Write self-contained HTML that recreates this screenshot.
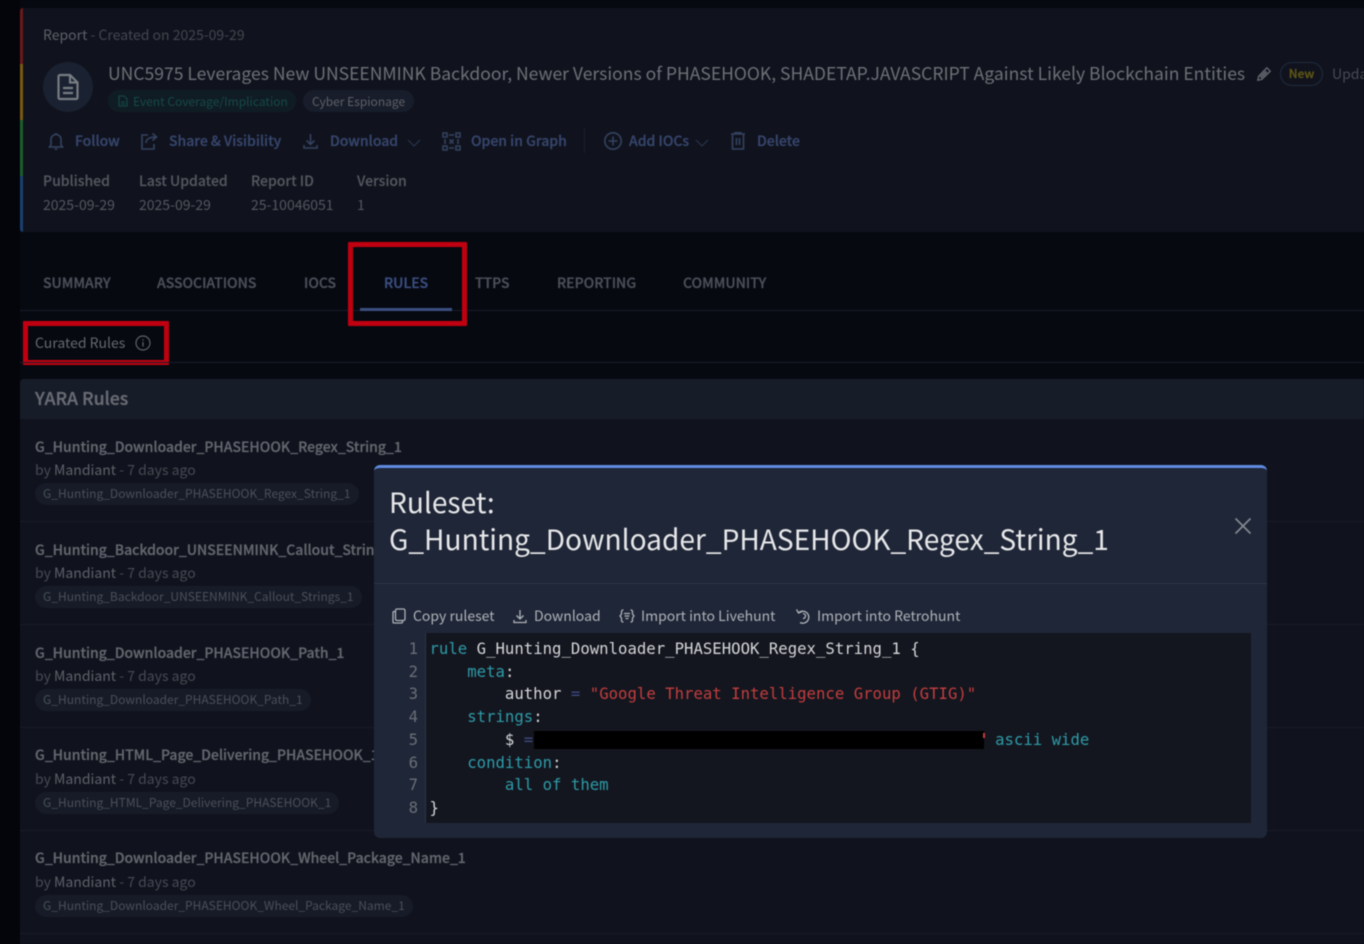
<!DOCTYPE html>
<html><head><meta charset="utf-8"><style>
html,body{margin:0;padding:0;width:1364px;height:944px;overflow:hidden;background:#05070f}
#w{position:absolute;left:0;top:0;width:1364px;height:944px;overflow:hidden;filter:blur(.5px);font-family:"Noto Sans CJK JP","Liberation Sans",sans-serif;background:#070911}
.t{position:absolute;white-space:nowrap;line-height:20px;height:20px}
.b{position:absolute}
svg{position:absolute;fill:none;overflow:visible}
.act{color:#36456c;font-size:14px;font-weight:500;-webkit-text-stroke:.3px #36456c}
.ic{stroke:#33425f;stroke-width:1.6}
.rt{color:#64676e;font-size:14px;font-weight:500;left:35px;-webkit-text-stroke:.25px #64676e}
.by{color:#474a52;font-size:14px;left:35px}
.by b{color:#5e6168;font-weight:400}
.tag{position:absolute;left:35px;height:22px;border-radius:11px;background:#171b28;color:#4a4f58;font-size:12px;line-height:22px;padding:0 8px;white-space:nowrap}
.div{position:absolute;left:20px;width:1344px;height:1px;background:#191c28}
.tab{color:#4b4f58;font-size:14px;font-weight:500;-webkit-text-stroke:.3px #4b4f58}
.lb{font-size:14px;color:#54575e;font-weight:500;-webkit-text-stroke:.15px #54575e}
.m{position:absolute;font-family:"DejaVu Sans Mono","Liberation Mono",monospace;font-size:15.66px;line-height:22.7px;white-space:pre;color:#d3d5d8}
.k{color:#2d9ba8}.s{color:#c23d3d}.o{color:#3d4a80}
.mb{color:#aeb2b8;font-size:14px}
.mi{stroke:#aeb2b8;stroke-width:1.3}
</style></head><body><div id="w">
<div class="b" style="left:0;top:0;width:20px;height:944px;background:#04050b"></div>
<!-- header card -->
<div class="b" style="left:20px;top:8px;width:1344px;height:224px;background:#10131d;border-radius:4px 0 0 4px"></div>
<div class="b" style="left:20px;top:8px;width:2.5px;height:56px;background:#6b1a1a;border-radius:3px 0 0 0"></div>
<div class="b" style="left:20px;top:64px;width:2.5px;height:56px;background:#7a5a12"></div>
<div class="b" style="left:20px;top:120px;width:2.5px;height:56px;background:#1c5e2a"></div>
<div class="b" style="left:20px;top:176px;width:2.5px;height:56px;background:#1a3f70;border-radius:0 0 0 3px"></div>
<div class="t" style="left:43px;top:24.5px;font-size:14px;color:#43464e"><span style="color:#5d6067">Report</span> - Created on 2025-09-29</div>
<div class="b" style="left:43px;top:62px;width:50px;height:50px;border-radius:50%;background:#1a2130"></div>
<svg style="left:56px;top:72px" width="24" height="30" viewBox="0 0 24 28"><path d="M2.500 3.500a1.500 1.500 0 0 1 1.500-1.500h10l7.500 7.500v15a1.500 1.500 0 0 1-1.500 1.500H4a1.500 1.500 0 0 1-1.500-1.500zM14 2v7.500h7.500M7 15h10M7 20h10" stroke="#777b82" stroke-width="2.200"/></svg>
<div class="t" style="left:108px;top:64px;font-size:17.55px;color:#6d7076">UNC5975 Leverages New UNSEENMINK Backdoor, Newer Versions of PHASEHOOK, SHADETAP.JAVASCRIPT Against Likely Blockchain Entities</div>
<svg style="left:1257px;top:67px" width="14" height="14" viewBox="0 0 14 14"><path d="M.8 13.200l.9-4L9.800.8l3.400 3.400-8.400 8.200z" stroke="#686b72" stroke-width="1.300"/><path d="M2.500 9.500l6-6 2 2-6 6z" fill="#5a5d64"/></svg>
<div class="b" style="left:1280px;top:62px;width:43px;height:24px;border:1.500px solid #1f2b40;border-radius:13px;box-sizing:border-box;color:#5f5615;font-size:12px;font-weight:500;text-align:center;line-height:22px;-webkit-text-stroke:.3px #5f5615">New</div>
<div class="t" style="left:1332px;top:64px;font-size:14px;color:#474a52">Update</div>
<div class="b" style="left:108px;top:90px;width:188px;height:22px;border-radius:11px;background:#101c24"></div>
<svg style="left:118px;top:95px" width="10" height="12" viewBox="0 0 10 12"><path d="M1 1h5l3 3v7H1zM3 7h4M3 9h4" stroke="#164a48" stroke-width="1.100"/></svg>
<div class="t" style="left:133px;top:91.5px;font-size:12px;color:#164a48">Event Coverage/Implication</div>
<div class="b" style="left:303px;top:90px;width:111px;height:22px;border-radius:11px;background:#181d2b"></div>
<div class="t" style="left:312px;top:91.5px;font-size:12px;color:#5d6067">Cyber Espionage</div>
<!-- actions -->
<svg class="ic" style="left:48px;top:132px" width="16" height="19" viewBox="0 0 16 19"><path d="M8 1v1.500M3 13V7.500a5 5 0 0 1 10 0V13l1.500 2h-13zM6.500 17h3"/></svg>
<div class="t act" style="left:75px;top:131px">Follow</div>
<svg class="ic" style="left:141px;top:132px" width="17" height="18" viewBox="0 0 17 18"><path d="M7 3H1v14h12v-5M5 11c0-4 3-6 10-6M11.500 1.500L15.500 5l-4 3.500"/></svg>
<div class="t act" style="left:169px;top:131px">Share &amp; Visibility</div>
<svg class="ic" style="left:303px;top:133px" width="15" height="17" viewBox="0 0 15 17"><path d="M7.500 1v10M3.500 7.500l4 4 4-4M1 12v3h13v-3"/></svg>
<div class="t act" style="left:330px;top:131px">Download</div>
<svg style="left:407px;top:139px" width="14" height="8" viewBox="0 0 14 8"><path d="M1 1l6 6 6-6" stroke="#2a3550" stroke-width="1.100"/></svg>
<svg class="ic" style="left:442px;top:132px" width="19" height="19" viewBox="0 0 19 19"><path d="M1 1h4v4H1zM14 1h4v4h-4zM1 14h4v4H1zM14 14h4v4h-4zM7 3h5M7 16h5M3 7v5M16 7v5M7.500 7.500l4 4M11.500 7.500l-4 4"/></svg>
<div class="t act" style="left:471px;top:131px">Open in Graph</div>
<div class="b" style="left:584px;top:128px;width:1px;height:25px;background:#1a1e2b"></div>
<svg class="ic" style="left:604px;top:132px" width="18" height="18" viewBox="0 0 18 18"><circle cx="9" cy="9" r="8.200"/><path d="M9 4.500v9M4.500 9h9"/></svg>
<div class="t act" style="left:629px;top:131px">Add IOCs</div>
<svg style="left:695px;top:139px" width="14" height="8" viewBox="0 0 14 8"><path d="M1 1l6 6 6-6" stroke="#2a3550" stroke-width="1.100"/></svg>
<svg class="ic" style="left:731px;top:132px" width="14" height="18" viewBox="0 0 14 18"><path d="M0 2h14M4 2V.8h6V2M1.500 2v15h11V2M5.500 6v7M8.500 6v7"/></svg>
<div class="t act" style="left:757px;top:131px">Delete</div>
<!-- meta -->
<div class="t lb" style="left:43px;top:171px">Published</div>
<div class="t lb" style="left:139px;top:171px">Last Updated</div>
<div class="t lb" style="left:251px;top:171px">Report ID</div>
<div class="t lb" style="left:357px;top:171px">Version</div>
<div class="t" style="left:43px;top:195px;font-size:14px;color:#54575e">2025-09-29</div>
<div class="t" style="left:139px;top:195px;font-size:14px;color:#54575e">2025-09-29</div>
<div class="t" style="left:251px;top:195px;font-size:14px;color:#54575e">25-10046051</div>
<div class="t" style="left:357px;top:195px;font-size:14px;color:#54575e">1</div>
<!-- tabs -->
<div class="t tab" style="left:43px;top:273px">SUMMARY</div>
<div class="t tab" style="left:157px;top:273px">ASSOCIATIONS</div>
<div class="t tab" style="left:304px;top:273px">IOCS</div>
<div class="t tab" style="left:384px;top:273px;color:#3a4f80;-webkit-text-stroke:.3px #3a4f80">RULES</div>
<div class="t tab" style="left:475px;top:273px">TTPS</div>
<div class="t tab" style="left:557px;top:273px">REPORTING</div>
<div class="t tab" style="left:683px;top:273px">COMMUNITY</div>
<div class="div" style="top:310px"></div>
<div class="b" style="left:360px;top:308px;width:92px;height:2.500px;background:#3a4f80"></div>
<div class="b" style="left:348px;top:242px;width:119px;height:84px;border:5px solid #c00010;box-sizing:border-box;border-radius:1px"></div>
<div class="b" style="left:23px;top:321px;width:146px;height:44px;border:5px solid #c00010;box-sizing:border-box;border-radius:1px"></div>
<div class="t" style="left:35px;top:333px;font-size:14px;color:#65686e">Curated Rules</div>
<svg style="left:135px;top:335px" width="16" height="16" viewBox="0 0 16 16"><circle cx="8" cy="8" r="7" stroke="#5d6067" stroke-width="1.200"/><path d="M8 7v4.500M8 4.300v1.300" stroke="#5d6067" stroke-width="1.300"/></svg>
<div class="div" style="top:362px"></div>
<!-- list -->
<div class="b" style="left:20px;top:379px;width:1344px;height:565px;background:#10131d;border-radius:4px 0 0 0"></div>
<div class="b" style="left:20px;top:379px;width:1344px;height:40px;background:#171c29;border-radius:4px 0 0 0"></div>
<div class="t" style="left:35px;top:388px;font-size:17.7px;color:#686b72;font-weight:500;-webkit-text-stroke:.3px #686b72">YARA Rules</div>

<div class="t rt" style="top:437px">G_Hunting_Downloader_PHASEHOOK_Regex_String_1</div>
<div class="t by" style="top:460px">by <b>Mandiant</b> - 7 days ago</div>
<div class="tag" style="top:483px">G_Hunting_Downloader_PHASEHOOK_Regex_String_1</div>
<div class="div" style="top:521px"></div>
<div class="t rt" style="top:540px">G_Hunting_Backdoor_UNSEENMINK_Callout_Strings_1</div>
<div class="t by" style="top:563px">by <b>Mandiant</b> - 7 days ago</div>
<div class="tag" style="top:586px">G_Hunting_Backdoor_UNSEENMINK_Callout_Strings_1</div>
<div class="div" style="top:624px"></div>
<div class="t rt" style="top:643px">G_Hunting_Downloader_PHASEHOOK_Path_1</div>
<div class="t by" style="top:666px">by <b>Mandiant</b> - 7 days ago</div>
<div class="tag" style="top:689px">G_Hunting_Downloader_PHASEHOOK_Path_1</div>
<div class="div" style="top:727px"></div>
<div class="t rt" style="top:745px">G_Hunting_HTML_Page_Delivering_PHASEHOOK_1</div>
<div class="t by" style="top:769px">by <b>Mandiant</b> - 7 days ago</div>
<div class="tag" style="top:792px">G_Hunting_HTML_Page_Delivering_PHASEHOOK_1</div>
<div class="div" style="top:830px"></div>
<div class="t rt" style="top:848px">G_Hunting_Downloader_PHASEHOOK_Wheel_Package_Name_1</div>
<div class="t by" style="top:872px">by <b>Mandiant</b> - 7 days ago</div>
<div class="tag" style="top:895px">G_Hunting_Downloader_PHASEHOOK_Wheel_Package_Name_1</div>
<div class="div" style="top:933px"></div>

<!-- modal -->
<div class="b" style="left:374px;top:465px;width:893px;height:373px;background:#1f2637;border-radius:6px;border-top:3px solid #5f8ae0;box-sizing:border-box"></div>
<div class="b" style="left:374px;top:583px;width:893px;height:1px;background:#2c3648"></div>
<div class="t" style="left:389px;top:483px;height:38px;line-height:38px;font-size:28.1px;color:#e6e7e9">Ruleset:</div>
<div class="t" style="left:389px;top:520px;height:38px;line-height:38px;font-size:28.1px;color:#e6e7e9">G_Hunting_Downloader_PHASEHOOK_Regex_String_1</div>
<svg style="left:1235px;top:518px" width="16" height="16" viewBox="0 0 16 16"><path d="M.5.500l15 15M15.500.500l-15 15" stroke="#868a92" stroke-width="1.600"/></svg>

<svg class="mi" style="left:392px;top:608px" width="14" height="16" viewBox="0 0 14 16"><rect x="3.500" y="1" width="9.500" height="11.500" rx="1.500"/><path d="M3.500 3.500H2a1 1 0 0 0-1 1V14a1 1 0 0 0 1 1h7.500a1 1 0 0 0 1-1v-1.500"/></svg>
<div class="t mb" style="left:413px;top:606px">Copy ruleset</div>
<svg class="mi" style="left:513px;top:609px" width="14" height="15" viewBox="0 0 14 15"><path d="M7 1v9M3.500 6.500L7 10l3.500-3.500M1 11v2.500h12V11"/></svg>
<div class="t mb" style="left:534px;top:606px">Download</div>
<svg class="mi" style="left:619px;top:609px" width="16" height="14" viewBox="0 0 16 14"><path d="M4.500 1H4a1.500 1.500 0 0 0-1.500 1.500V5L1 7l1.500 2v2.500A1.500 1.500 0 0 0 4 13h.5M11.500 1h.5a1.500 1.500 0 0 1 1.500 1.500V5L15 7l-1.500 2v2.500A1.500 1.500 0 0 1 12 13h-.5M5 4.500h6M5.500 7h5M6.500 9.500h3"/></svg>
<div class="t mb" style="left:641px;top:606px">Import into Livehunt</div>
<svg class="mi" style="left:795px;top:608px" width="16" height="16" viewBox="0 0 16 16"><path d="M1.500 1.500l2 3.500 3.500-1.500M3.500 5A6 6 0 1 1 5 14.500M8 5.500a2.500 2.500 0 1 1 0 5"/></svg>
<div class="t mb" style="left:817px;top:606px">Import into Retrohunt</div>

<div class="b" style="left:425px;top:633px;width:826px;height:190px;background:#14161f;border-left:1px solid #2c3648;box-sizing:border-box"></div>
<div class="m" style="left:398px;top:638px;width:20px;text-align:right;color:#6a6e76">1
2
3
4
5
6
7
8</div>
<div class="m" style="left:429.500px;top:638px"><span class="k">rule</span> G_Hunting_Downloader_PHASEHOOK_Regex_String_1 {
    <span class="k">meta</span>:
        author <span class="o">=</span> <span class="s">"Google Threat Intelligence Group (GTIG)"</span>
    <span class="k">strings</span>:
        $ <span class="o">=</span>                                                 <span class="k">ascii wide</span>
    <span class="k">condition</span>:
        <span class="k">all of them</span>
}</div>
<div class="b" style="left:534px;top:731px;width:450px;height:18px;background:#000"></div>
<div class="b" style="left:983px;top:733px;width:2px;height:5px;background:#c23d3d"></div>
</div></body></html>
